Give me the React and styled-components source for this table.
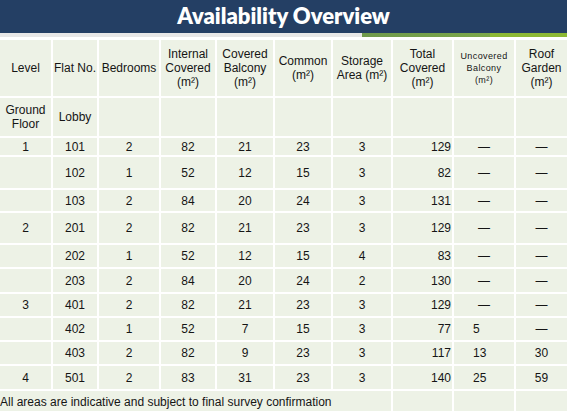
import React from 'react';
import styled, { createGlobalStyle } from 'styled-components';

const Global = createGlobalStyle`
  html, body { margin: 0; padding: 0; background: #ffffff; }
  body { font-family: "Liberation Sans", Arial, sans-serif; overflow: hidden; }
`;

const Page = styled.div`
  width: 567px;
  height: 411px;
  overflow: hidden;
  display: flex;
  flex-direction: column;
`;

const TitleBar = styled.header`
  height: 33px;
  flex: none;
  background: #243f64;
  display: flex;
  align-items: center;
  justify-content: center;
`;

const Title = styled.h1`
  margin: 0;
  font-family: Lato, "Open Sans", sans-serif;
  font-weight: 800;
  font-size: 22px;
  line-height: 1;
  color: #ffffff;
  padding-bottom: 2px;
`;

const Strip = styled.div`
  display: flex;
  height: 4px;
  flex: none;
  margin-bottom: 3px;
`;

const StripPart = styled.div`
  flex: ${p => (p.$width ? `0 0 ${p.$width}px` : '1 1 auto')};
  background: ${p => p.$bg};
`;

const Table = styled.div`
  display: grid;
  grid-template-columns: 51px 44px 60px 54px 56px 56px 58px 59px 60px 51px;
  grid-template-rows: ${p => p.$rows};
  gap: 2px;
`;

const Row = styled.div`
  display: contents;
`;

const Cell = styled.div`
  background: #edf2e6;
  display: flex;
  align-items: center;
  justify-content: ${p => (p.$align === 'right' ? 'flex-end' : p.$align === 'left' ? 'flex-start' : 'center')};
  padding: ${p => (p.$align === 'right' ? '0 1px 0 0' : p.$align === 'left' ? '0 0 0 19px' : '0')};
  text-align: center;
  font-size: 12px;
  line-height: 14px;
  color: #151515;
  white-space: nowrap;
`;

const HeadCell = styled(Cell)`
  font-size: ${p => (p.$small ? '9px' : '12px')};
  line-height: ${p => (p.$small ? '12px' : '14px')};
  letter-spacing: ${p => (p.$small ? '0.4px' : '0')};
`;

const WrapCell = styled(Cell)`
  white-space: normal;
`;

const Note = styled(Cell)`
  grid-column: span 7;
  justify-content: flex-start;
  padding: 0;
`;

const headers = [
  ['Level'],
  ['Flat No.'],
  ['Bedrooms'],
  ['Internal', 'Covered', '(m²)'],
  ['Covered', 'Balcony', '(m²)'],
  ['Common', '(m²)'],
  ['Storage', 'Area (m²)'],
  ['Total', 'Covered', '(m²)'],
  ['Uncovered', 'Balcony', '(m²)'],
  ['Roof', 'Garden', '(m²)'],
];

const D = '—';
const data = [
  ['1', '101', '2', '82', '21', '23', '3', '129', D, D],
  ['', '102', '1', '52', '12', '15', '3', '82', D, D],
  ['', '103', '2', '84', '20', '24', '3', '131', D, D],
  ['2', '201', '2', '82', '21', '23', '3', '129', D, D],
  ['', '202', '1', '52', '12', '15', '4', '83', D, D],
  ['', '203', '2', '84', '20', '24', '2', '130', D, D],
  ['3', '401', '2', '82', '21', '23', '3', '129', D, D],
  ['', '402', '1', '52', '7', '15', '3', '77', '5', D],
  ['', '403', '2', '82', '9', '23', '3', '117', '13', '30'],
  ['4', '501', '2', '83', '31', '23', '3', '140', '25', '59'],
];

const rowHeights = '56px 38px 17px 31px 21px 30px 22px 23px 22px 22px 22px 23px 22px';

const alignFor = (col, value) => {
  if (col === 7) return 'right';
  if (col === 8 && value !== D) return 'left';
  return 'center';
};

export default function App() {
  return (
    <Page>
      <Global />
      <TitleBar>
        <Title>Availability Overview</Title>
      </TitleBar>
      <Strip>
        <StripPart $bg="#e7e7e7" />
        <StripPart $width={128} $bg="linear-gradient(90deg, #6f994c, #7ba74a)" />
        <StripPart $width={77} $bg="#8cb833" />
      </Strip>
      <Table $rows={rowHeights}>
        <Row>
          {headers.map((lines, i) => (
            <HeadCell key={i} $small={i === 8}>
              <span>
                {lines.map((l, j) => (
                  <React.Fragment key={j}>
                    {j > 0 && <br />}
                    {l}
                  </React.Fragment>
                ))}
              </span>
            </HeadCell>
          ))}
        </Row>
        <Row>
          <WrapCell>Ground Floor</WrapCell>
          <Cell>Lobby</Cell>
          {Array.from({ length: 8 }).map((_, i) => (
            <Cell key={i} />
          ))}
        </Row>
        {data.map((r, ri) => (
          <Row key={ri}>
            {r.map((v, ci) => (
              <Cell key={ci} $align={alignFor(ci, v)}>
                {v}
              </Cell>
            ))}
          </Row>
        ))}
        <Row>
          <Note>All areas are indicative and subject to final survey confirmation</Note>
          <Cell />
          <Cell />
          <Cell />
        </Row>
      </Table>
    </Page>
  );
}
